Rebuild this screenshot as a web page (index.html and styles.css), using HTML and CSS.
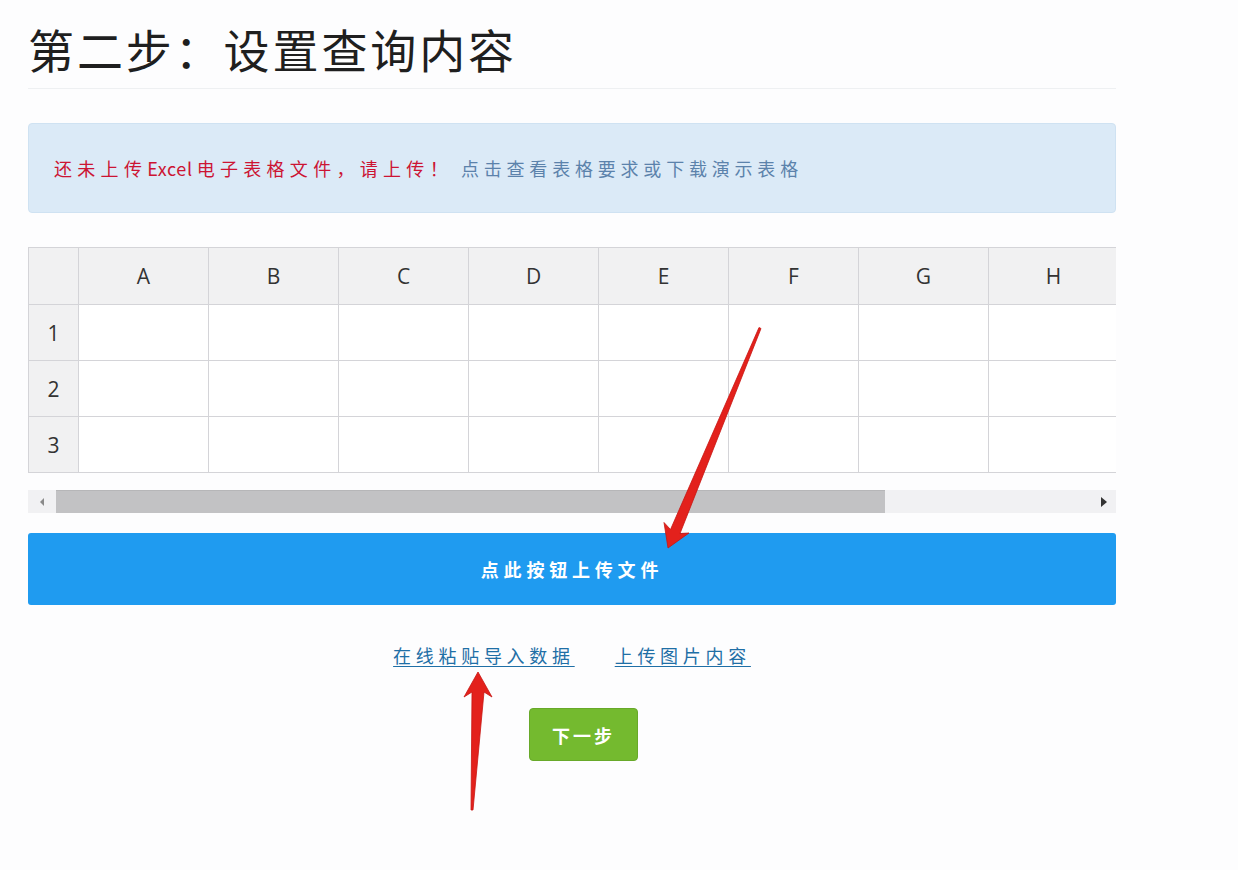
FILE: index.html
```html
<!DOCTYPE html>
<html lang="zh-CN">
<head>
<meta charset="utf-8">
<title>第二步：设置查询内容</title>
<link rel="stylesheet" href="styles.css">
</head>
<body>
<div class="page">
  <h1 class="title">第二步：设置查询内容</h1>

  <div class="alert">
    <span class="alert-warn">还未上传<span class="latin">Excel</span>电子表格文件，请上传！</span>
    <a class="alert-link" href="#">点击查看表格要求或下载演示表格</a>
  </div>

  <div class="sheet">
    <table class="grid">
      <thead>
        <tr>
          <th class="corner"></th>
          <th>A</th><th>B</th><th>C</th><th>D</th><th>E</th><th>F</th><th>G</th><th>H</th>
        </tr>
      </thead>
      <tbody>
        <tr><th class="rowhead">1</th><td></td><td></td><td></td><td></td><td></td><td></td><td></td><td></td></tr>
        <tr><th class="rowhead">2</th><td></td><td></td><td></td><td></td><td></td><td></td><td></td><td></td></tr>
        <tr><th class="rowhead">3</th><td></td><td></td><td></td><td></td><td></td><td></td><td></td><td></td></tr>
      </tbody>
    </table>
  </div>

  <div class="scrollbar">
    <span class="sb-arrow sb-left"></span>
    <div class="sb-track"><div class="sb-thumb"></div></div>
    <span class="sb-arrow sb-right"></span>
  </div>

  <button class="upload-btn" type="button">点此按钮上传文件</button>

  <div class="links">
    <a href="#" class="text-link">在线粘贴导入数据</a>
    <a href="#" class="text-link">上传图片内容</a>
  </div>

  <div class="next-row">
    <button class="next-btn" type="button">下一步</button>
  </div>
</div>

<svg class="annotations" width="1238" height="870" viewBox="0 0 1238 870" aria-hidden="true">
  <polygon class="arrow" points="668,548 689,533 680,533.5 761,328.5 759,327.5 670.5,529.5 664,522.5"/>
  <polygon class="arrow" points="478,672 492,697 484,692 473,810 471,810 472,692 464,697"/>
</svg>
</body>
</html>
```

FILE: styles.css
```css
* { box-sizing: border-box; }

html, body {
  margin: 0;
  padding: 0;
  background: #fdfdfe;
}

body {
  font-family: "Noto Sans", "Noto Sans CJK SC", sans-serif;
  color: #222;
  width: 1238px;
  height: 870px;
  overflow: hidden;
  position: relative;
}

.page {
  width: 1088px;
  margin-left: 28px;
  padding-top: 20px;
  display: flex;
  flex-direction: column;
}

.title {
  margin: 0;
  font-family: "Noto Sans CJK SC", sans-serif;
  font-weight: 400;
  font-size: 46px;
  line-height: 56px;
  letter-spacing: 2.9px;
  color: #1f1f1f;
  padding-bottom: 12px;
  border-bottom: 1px solid #eef0f2;
}

.alert {
  margin-top: 34px;
  height: 90px;
  background: #dbeaf7;
  border: 1px solid #cfe2f2;
  border-radius: 4px;
  display: flex;
  align-items: center;
  padding-left: 25px;
  gap: 8px;
  font-family: "Noto Sans CJK SC", sans-serif;
  font-size: 18px;
}

.alert-warn {
  color: #cc1433;
  letter-spacing: 5.3px;
}

.alert-warn .latin {
  letter-spacing: 0.6px;
  margin-right: 4px;
}

.alert-link {
  color: #5b82ab;
  text-decoration: none;
  letter-spacing: 4.8px;
}

.sheet {
  margin-top: 34px;
  width: 1088px;
  overflow: hidden;
}

.grid {
  border-collapse: collapse;
  table-layout: fixed;
  width: 1090px;
  font-family: "Open Sans", "Noto Sans", sans-serif;
}

.grid th,
.grid td {
  border: 1px solid #d4d4d8;
  width: 130px;
  padding: 0;
}

.grid thead th {
  height: 57px;
  background: #f1f1f2;
  font-weight: 400;
  font-size: 21px;
  color: #333;
  text-align: center;
}

.grid .corner {
  width: 50px;
}

.grid tbody td,
.grid tbody th {
  height: 56px;
  background: #fff;
}

.grid .rowhead {
  width: 50px;
  background: #f1f1f2;
  font-weight: 400;
  font-size: 21px;
  color: #333;
  text-align: center;
}

.scrollbar {
  margin-top: 17px;
  height: 23px;
  background: #f1f1f3;
  display: flex;
  align-items: center;
}

.sb-arrow {
  width: 28px;
  height: 23px;
  display: flex;
  align-items: center;
  justify-content: center;
  flex: none;
}

.sb-left::before {
  content: "";
  border-style: solid;
  border-width: 4px 4px 4px 0;
  border-color: transparent #8a8a8a transparent transparent;
}

.sb-right {
  width: 24px;
}

.sb-right::before {
  content: "";
  border-style: solid;
  border-width: 5px 0 5px 6px;
  border-color: transparent transparent transparent #333;
}

.sb-track {
  flex: 1;
  height: 23px;
  display: flex;
  align-items: stretch;
}

.sb-thumb {
  width: 829px;
  background: #c2c2c4;
  border-top: 1px solid #b6b6b8;
}

.upload-btn {
  margin-top: 20px;
  height: 72px;
  width: 100%;
  border: none;
  border-radius: 3px;
  background: #1f9bf0;
  color: #fff;
  font-family: "Noto Sans CJK SC", sans-serif;
  font-size: 18px;
  font-weight: 700;
  letter-spacing: 4.8px;
  padding: 0;
}

.links {
  margin-top: 38px;
  display: flex;
  justify-content: center;
  gap: 40px;
  font-family: "Noto Sans CJK SC", sans-serif;
  font-size: 18px;
  line-height: 24px;
  letter-spacing: 4.7px;
}

.text-link {
  color: #1f6fa6;
  text-decoration: underline;
  text-underline-offset: 3px;
}

.next-row {
  margin-top: 41px;
  display: flex;
  justify-content: center;
  padding-left: 23px;
}

.next-btn {
  width: 109px;
  height: 53px;
  border: 1px solid #68a92a;
  border-radius: 4px;
  background: #74ba2f;
  color: #fff;
  font-family: "Noto Sans CJK SC", sans-serif;
  font-size: 18px;
  font-weight: 700;
  letter-spacing: 3px;
  padding: 0;
}

.annotations {
  position: absolute;
  left: 0;
  top: 0;
  pointer-events: none;
}

.arrow {
  fill: #e3211c;
  stroke: #c81512;
  stroke-width: 0.8;
  stroke-linejoin: round;
}
```
